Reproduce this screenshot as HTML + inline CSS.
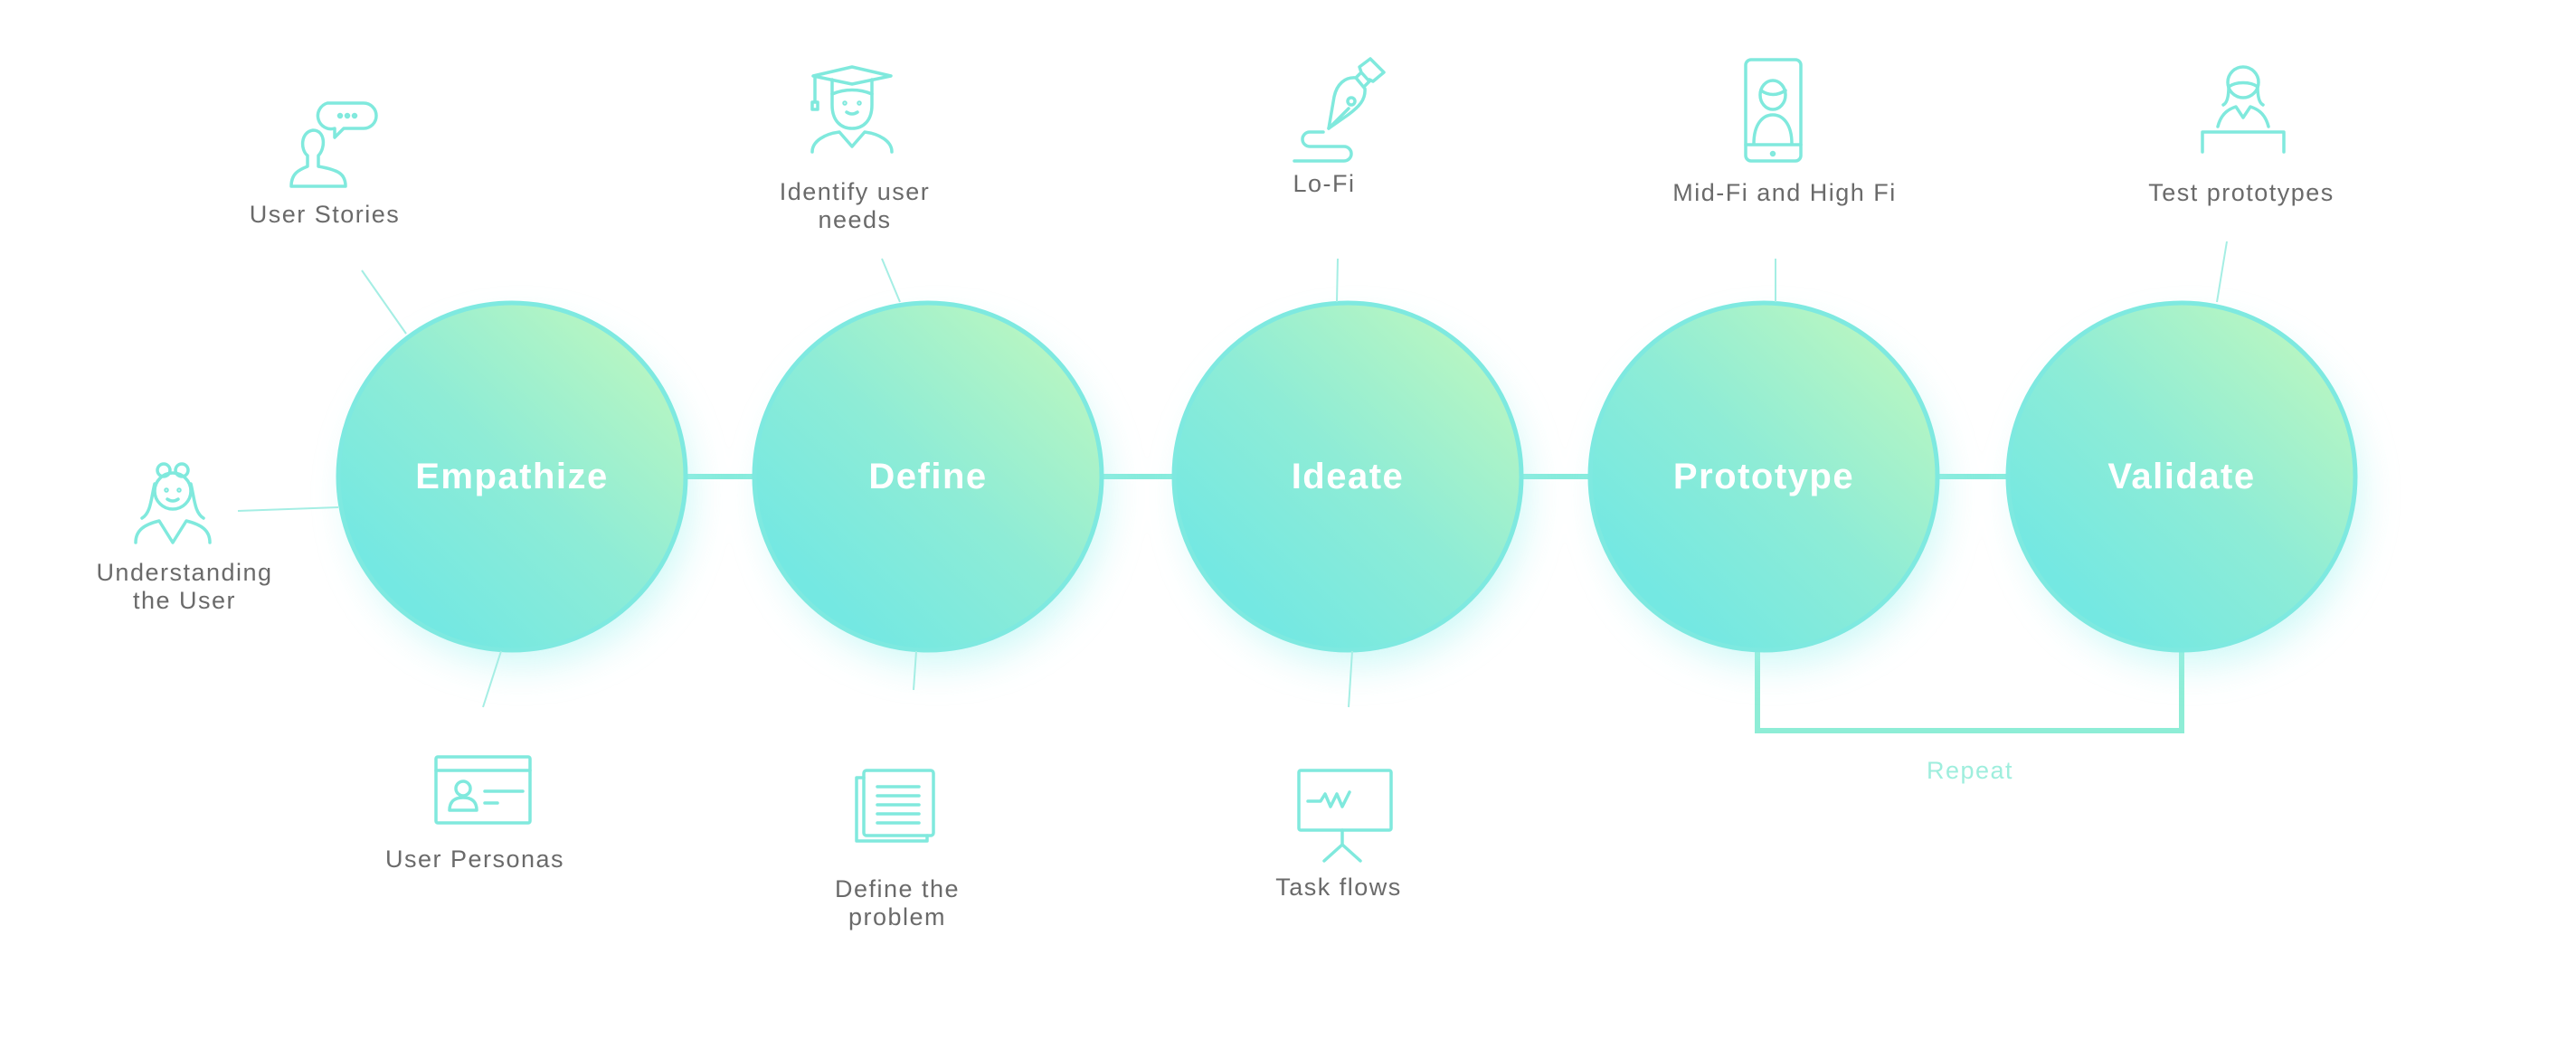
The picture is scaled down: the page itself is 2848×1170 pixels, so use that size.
<!DOCTYPE html>
<html><head><meta charset="utf-8"><style>
html,body{margin:0;padding:0;background:#fff;}
svg{display:block}
.lb{font-family:"Liberation Sans",sans-serif;font-size:27px;fill:#6a6a6a;letter-spacing:1.5px;text-anchor:middle}
.ct{font-family:"Liberation Sans",sans-serif;font-size:40px;font-weight:bold;fill:#fff;letter-spacing:1.5px;text-anchor:middle}
.ic{fill:none;stroke:#80e9dd;stroke-width:3.5;stroke-linecap:round;stroke-linejoin:round}
.ln{stroke:#a5eee4;stroke-width:2}
</style></head><body>
<svg width="2848" height="1170" viewBox="0 0 2848 1170">
<defs>
<linearGradient id="g" x1="0.2" y1="0.85" x2="0.85" y2="0.15">
<stop offset="0" stop-color="#74e8e2"/><stop offset="0.5" stop-color="#8eecd6"/><stop offset="1" stop-color="#b5f5c3"/>
</linearGradient>
<filter id="sh" x="-50%" y="-50%" width="200%" height="200%">
<feGaussianBlur stdDeviation="22"/>
</filter>
</defs>
<!-- connectors -->
<g stroke="#86ebdc" stroke-width="6">
<line x1="758" y1="527" x2="833" y2="527"/>
<line x1="1218" y1="527" x2="1298" y2="527"/>
<line x1="1683" y1="527" x2="1758" y2="527"/>
<line x1="2143" y1="527" x2="2220" y2="527"/>
</g>
<path d="M1943 718 V808 H2412 V718" fill="none" stroke="#8eedd6" stroke-width="6"/>
<!-- shadows -->
<g fill="#9ff3f0" opacity="0.55" filter="url(#sh)">
<circle cx="576" cy="548" r="185"/><circle cx="1036" cy="548" r="185"/><circle cx="1500" cy="548" r="185"/><circle cx="1960" cy="548" r="185"/><circle cx="2422" cy="548" r="185"/>
</g>
<g fill="url(#g)" stroke="#7ee9e0" stroke-width="5">
<circle cx="566" cy="527" r="192"/><circle cx="1026" cy="527" r="192"/><circle cx="1490" cy="527" r="192"/><circle cx="1950" cy="527" r="192"/><circle cx="2412" cy="527" r="192"/>
</g>
<text class="ct" x="566" y="540">Empathize</text>
<text class="ct" x="1026" y="540">Define</text>
<text class="ct" x="1490" y="540">Ideate</text>
<text class="ct" x="1950" y="540">Prototype</text>
<text class="ct" x="2412" y="540">Validate</text>
<!-- thin lines -->
<g class="ln">
<line x1="400" y1="299" x2="449" y2="369"/>
<line x1="975" y1="286" x2="995" y2="334"/>
<line x1="263" y1="565" x2="374" y2="561"/>
<line x1="554" y1="720" x2="534" y2="782"/>
<line x1="1013" y1="720" x2="1010" y2="763"/>
<line x1="1479" y1="286" x2="1478" y2="334"/>
<line x1="1495" y1="720" x2="1491" y2="782"/>
<line x1="1963" y1="286" x2="1963" y2="334"/>
<line x1="2462" y1="267" x2="2451" y2="334"/>
</g>
<!-- labels -->
<text class="lb" x="359" y="246">User Stories</text>
<text class="lb" x="945" y="221">Identify user</text>
<text class="lb" x="945" y="252">needs</text>
<text class="lb" x="204" y="642">Understanding</text>
<text class="lb" x="204" y="673">the User</text>
<text class="lb" x="525" y="959">User Personas</text>
<text class="lb" x="992" y="992">Define the</text>
<text class="lb" x="992" y="1023">problem</text>
<text class="lb" x="1464" y="212">Lo-Fi</text>
<text class="lb" x="1480" y="990">Task flows</text>
<text class="lb" x="1973" y="222">Mid-Fi and High Fi</text>
<text class="lb" x="2478" y="222">Test prototypes</text>
<text class="lb" x="2178" y="861" style="fill:#9eeedd">Repeat</text>
<!-- icons -->
<g class="ic">
<!-- user stories -->
<path d="M340 172 c-8 -6 -8 -26 6 -28 c14 0 14 20 6 28 l0 12 c22 4 30 8 30 22 h-60 c0 -14 8 -18 18 -22 z"/>
<path d="M362 114 h40 a14 14 0 0 1 0 28 h-22 l-10 10 v-10 a14 14 0 0 1 -8 -28z"/>
<circle cx="376" cy="128" r="1.5"/><circle cx="384" cy="128" r="1.5"/><circle cx="392" cy="128" r="1.5"/>
<!-- graduate -->
<path d="M899 84 l43 -10 l43 10 l-43 9 z"/>
<path d="M920 88 v28 c0 18 10 26 22 26 c12 0 22 -8 22 -26 v-28"/>
<path d="M920 104 c14 -6 30 -6 44 0"/>
<path d="M901 85 v28 M898 113 h6 v8 h-6 z"/>
<circle cx="934" cy="114" r="1"/><circle cx="950" cy="114" r="1"/><path d="M936 124 q6 4 12 0"/>
<path d="M898 168 c0 -12 14 -20 30 -22 l14 16 l14 -16 c16 2 30 10 30 22"/>
<!-- woman -->
<path d="M150 600 c0 -14 10 -20 26 -24 l15 24 l15 -24 c16 4 26 10 26 24"/>
<circle cx="191" cy="543" r="20"/>
<path d="M171 535 c-4 16 -4 32 -14 38 M211 535 c4 16 4 32 14 38"/>
<circle cx="181" cy="520" r="7"/><circle cx="201" cy="520" r="7"/>
<circle cx="184" cy="542" r="1"/><circle cx="198" cy="542" r="1"/><path d="M185 552 q6 4 12 0"/>
<!-- persona card -->
<rect x="482" y="837" width="104" height="73" rx="2"/>
<line x1="482" y1="852" x2="586" y2="852"/>
<circle cx="512" cy="872" r="8"/><path d="M497 896 c0 -10 6 -14 15 -14 c9 0 15 4 15 14 z"/>
<line x1="536" y1="875" x2="578" y2="875"/><line x1="536" y1="888" x2="550" y2="888"/>
<!-- document -->
<rect x="955" y="852" width="77" height="72" rx="3"/>
<path d="M955 860 h-8 v70 h78 v-6"/>
<line x1="970" y1="870" x2="1016" y2="870"/><line x1="970" y1="880" x2="1016" y2="880"/><line x1="970" y1="890" x2="1016" y2="890"/><line x1="970" y1="900" x2="1016" y2="900"/><line x1="970" y1="910" x2="1016" y2="910"/>
<!-- pen -->
<path d="M1469 142 l6 -35 c3 -14 12 -22 24 -21 l10 12 c1 12 -6 20 -20 30 z"/>
<path d="M1469 142 l22 -22"/><circle cx="1494" cy="112" r="4"/>
<path d="M1499 86 l6 -6 l9 10 l-6 6 M1505 80 l-2 -6 l12 -9 l15 15 l-12 10 l-4 -2"/>
<path d="M1463 146 h-15 a8 8 0 0 0 0 16 h38 a8 8 0 0 1 0 16 h-55"/>
<!-- task board -->
<rect x="1436" y="852" width="102" height="66" rx="2"/>
<path d="M1446 886 h14 l5 -8 l6 14 l7 -14 l6 14 l8 -16"/>
<line x1="1484" y1="918" x2="1484" y2="934"/><path d="M1464 952 l20 -18 l20 18"/>
<!-- phone -->
<rect x="1930" y="66" width="61" height="112" rx="6"/>
<line x1="1930" y1="160" x2="1991" y2="160"/><circle cx="1960" cy="170" r="1.5"/>
<ellipse cx="1960" cy="105" rx="14" ry="16"/><path d="M1947 100 c8 6 18 6 27 0"/>
<path d="M1939 159 c0 -22 10 -32 21 -32 c11 0 21 10 21 32"/>
<!-- tester -->
<circle cx="2480" cy="91" r="17"/><path d="M2464 96 c8 -6 24 -6 32 0"/>
<path d="M2464 96 c0 12 -2 18 -6 20 M2496 96 c0 12 2 18 6 20"/>
<path d="M2452 140 c4 -16 14 -20 20 -22 l8 12 l8 -12 c6 2 16 6 20 22"/>
<path d="M2435 168 v-22 h90 v22"/>
</g>
</svg>
</body></html>
